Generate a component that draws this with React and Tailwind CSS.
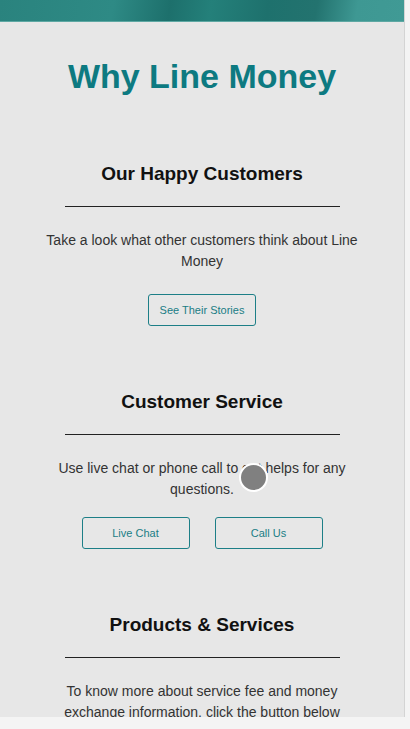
// "Why Line Money" mobile page: teal banner, three info sections with dividers and outline buttons.
const sections = [
  {
    title: 'Our Happy Customers',
    text: 'Take a look what other customers think about Line Money',
    textWidth: 'w-[320px]',
    buttons: ['See Their Stories'],
    btnGap: 'mt-[22px]',
  },
  {
    title: 'Customer Service',
    text: 'Use live chat or phone call to get helps for any questions.',
    textWidth: 'w-[300px]',
    buttons: ['Live Chat', 'Call Us'],
    btnGap: 'mt-[17px]',
  },
  {
    title: 'Products & Services',
    text: 'To know more about service fee and money exchange information, click the button below',
    textWidth: 'w-[300px]',
    buttons: [],
    btnGap: '',
  },
];

function Section({ s }) {
  return (
    <section className="mt-[64px] flex flex-col items-center">
      <h2 className="text-[19px] leading-[24px] font-bold text-[#111]">{s.title}</h2>
      <div className="mt-[20px] h-px w-[275px] bg-[#222]" />
      <p className={`mt-[23px] ${s.textWidth} text-center text-[14px] leading-[21px] text-[#333]`}>{s.text}</p>
      {s.buttons.length > 0 && (
        <div className={`${s.btnGap} flex gap-[25px]`}>
          {s.buttons.map((b) => (
            <button
              key={b}
              className="h-[32px] w-[108px] rounded-[3px] border border-[#1d7f87] text-[11px] text-[#1a7d85]"
            >
              {b}
            </button>
          ))}
        </div>
      )}
    </section>
  );
}

export default function App() {
  return (
    <div className="relative h-[729px] w-[410px] overflow-hidden bg-[#f4f4f4] font-['Liberation_Sans',Arial,sans-serif]">
      <div className="h-[717px] w-[405px] overflow-hidden border-r border-[#d4d4d4] bg-[#e7e7e7]">
        <div className="h-[22px] border-b border-[#5ea8a3] bg-[linear-gradient(100deg,#2a837e_0%,#2e8a85_28%,#1d706c_42%,#24807a_52%,#1e716d_66%,#23736f_78%,#3e9893_88%,#409a95_100%)]" />
        <h1 className="mt-[34px] text-center text-[34px] leading-[40px] font-bold text-[#0d7a81]">Why Line Money</h1>
        <div className="flex flex-col pt-[2px]">
          {sections.map((s) => (
            <Section key={s.title} s={s} />
          ))}
        </div>
      </div>
      <div className="absolute left-[239px] top-[463px] h-[29px] w-[29px] rounded-full border-2 border-white bg-[#808080]" />
    </div>
  );
}
